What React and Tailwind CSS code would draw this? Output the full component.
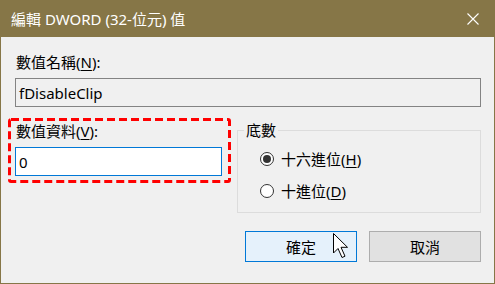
export default function App() {
  const font = { fontFamily: '"Noto Sans", "Noto Sans CJK TC", sans-serif' };
  return (
    <div className="w-[495px] h-[284px] flex flex-col bg-white text-[15px] text-black" style={font}>
      {/* title bar */}
      <div className="h-[37px] bg-[#867647] flex items-center justify-between pl-[11px] pr-[16px] shrink-0">
        <span className="text-white text-[15px] leading-[20px]">編輯 DWORD (32-位元) 值</span>
        <svg width="12" height="12" viewBox="0 0 12 12">
          <path d="M0.5 0.5 L11.5 11.5 M11.5 0.5 L0.5 11.5" stroke="#ffffff" strokeWidth="1.1" fill="none" />
        </svg>
      </div>
      {/* body */}
      <div className="relative flex-1 bg-[#f0f0f0] border-l border-r border-b border-[#867647] flex flex-col pl-[14px] pr-[13px]">
        <div className="mt-[15px] leading-[20px] pl-[1px]">
          數值名稱(<span className="underline underline-offset-2">N</span>):
        </div>
        <div className="mt-[6px] h-[29px] w-[466px] border border-[#838383] bg-[#f0f0f0] flex items-center pl-[3px] leading-[20px]">
          fDisableClip
        </div>
        <div className="mt-[11px] flex items-start">
          {/* left column with dashed annotation */}
          <div className="relative ml-[-7px] w-[223px] h-[65px] flex flex-col pl-[7px] pt-[3px]">
            <div className="leading-[20px] pl-[1px]">
              數值資料(<span className="underline underline-offset-2">V</span>):
            </div>
            <div className="mt-[6px] h-[29px] w-[207px] border border-[#0078d7] bg-white flex items-center pl-[3px] leading-[20px]">
              0
            </div>
            <svg className="absolute inset-0 pointer-events-none" width="223" height="65" viewBox="0 0 223 65">
              <rect x="1.5" y="1.5" width="220" height="62" rx="1.5" fill="none" stroke="#ff0000" strokeWidth="3" strokeDasharray="8 4" />
            </svg>
          </div>
          {/* group box */}
          <div className="relative ml-[6px] mt-[12px] w-[244px] h-[83px] border border-[#dcdcdc]">
            <div className="absolute left-[6px] top-[-11px] px-[2px] bg-[#f0f0f0] leading-[20px]">底數</div>
            <div className="flex flex-col pl-[22px] pt-[18px] gap-[12px]">
              <div className="flex items-center h-[20px]">
                <div className="w-[14px] h-[14px] rounded-full border border-[#333333] bg-white flex items-center justify-center">
                  <div className="w-[8px] h-[8px] rounded-full bg-[#333333]" />
                </div>
                <span className="ml-[7px] leading-[20px]">十六進位(<span className="underline underline-offset-2">H</span>)</span>
              </div>
              <div className="flex items-center h-[20px]">
                <div className="w-[14px] h-[14px] rounded-full border border-[#333333] bg-white" />
                <span className="ml-[7px] leading-[20px]">十進位(<span className="underline underline-offset-2">D</span>)</span>
              </div>
            </div>
          </div>
        </div>
        <div className="mt-[18px] flex justify-end gap-[12px]">
          <div className="relative w-[112px] h-[31px] border border-[#0078d7] bg-[#e5f1fb] flex items-center justify-center leading-[20px]">
            確定
            <svg className="absolute left-[87px] top-[1px]" width="17" height="26" viewBox="0 0 17 26">
              <path d="M0.5 0.5 L0.5 20 L5 15.5 L9 24.5 L12 23.2 L8 14.3 L14.5 14.3 Z" fill="#ffffff" stroke="#000000" strokeWidth="1" strokeLinejoin="miter" />
            </svg>
          </div>
          <div className="w-[112px] h-[31px] border border-[#adadad] bg-[#e1e1e1] flex items-center justify-center leading-[20px]">
            取消
          </div>
        </div>
      </div>
    </div>
  );
}
